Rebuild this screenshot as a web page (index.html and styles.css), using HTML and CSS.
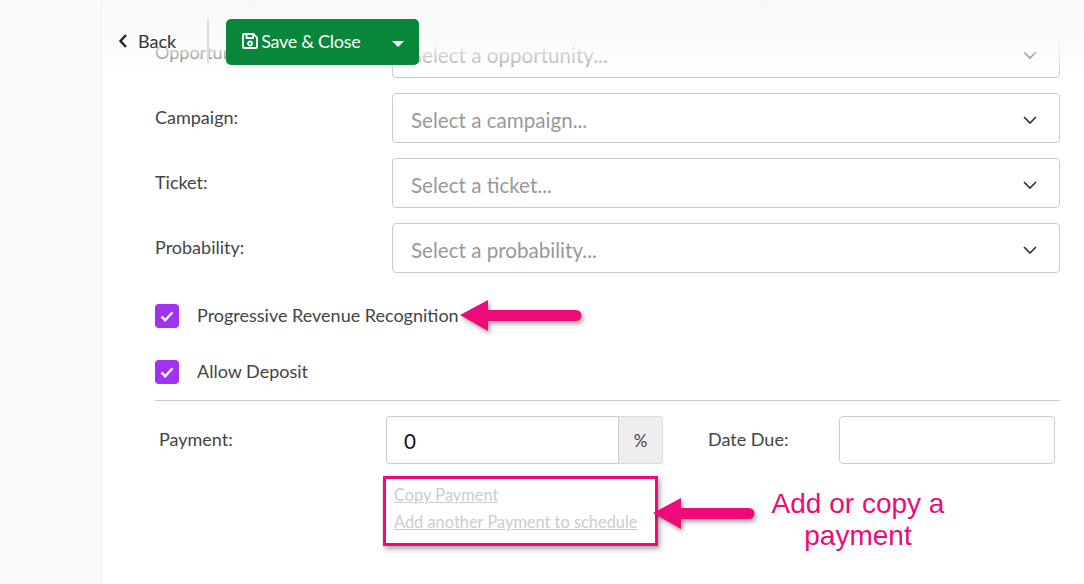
FILE: index.html
```html
<!DOCTYPE html>
<html lang="en">
<head>
<meta charset="utf-8">
<title>Payment form</title>
<link rel="stylesheet" href="styles.css">
</head>
<body>
<div class="page">
  <aside class="sidebar"></aside>
  <main class="main">
    <form class="form">
      <div class="row"><label class="label">Opportunity:</label><div class="select"><span>Select a opportunity...</span><svg class="chev" viewBox="0 0 14 8"><path d="M1 1l6 6 6-6"/></svg></div></div>
      <div class="row"><label class="label">Campaign:</label><div class="select"><span>Select a campaign...</span><svg class="chev" viewBox="0 0 14 8"><path d="M1 1l6 6 6-6"/></svg></div></div>
      <div class="row"><label class="label">Ticket:</label><div class="select"><span>Select a ticket...</span><svg class="chev" viewBox="0 0 14 8"><path d="M1 1l6 6 6-6"/></svg></div></div>
      <div class="row"><label class="label">Probability:</label><div class="select"><span>Select a probability...</span><svg class="chev" viewBox="0 0 14 8"><path d="M1 1l6 6 6-6"/></svg></div></div>
      <div class="check-row first"><span class="check"><svg viewBox="0 0 24 24"><path d="M6.500 12.500l3.700 3.700L17.500 8.300"/></svg></span><span class="check-text">Progressive Revenue Recognition</span></div>
      <div class="check-row"><span class="check"><svg viewBox="0 0 24 24"><path d="M6.500 12.500l3.700 3.700L17.500 8.300"/></svg></span><span class="check-text">Allow Deposit</span></div>
      <hr class="rule">
      <div class="pay-row">
        <label class="pay-label">Payment:</label>
        <div class="pay-col">
          <div class="pay-group"><div class="pay-input">0</div><div class="pay-addon">%</div></div>
          <div class="links"><a class="link">Copy Payment</a><a class="link">Add another Payment to schedule</a></div>
        </div>
        <label class="due-label">Date Due:</label>
        <div class="due-input"></div>
      </div>
    </form>
  </main>
</div>

<header class="toolbar">
  <button class="back" type="button"><svg viewBox="0 0 10 16"><path d="M8 2L2.500 8 8 14"/></svg>Back</button>
  <span class="divider"></span>
  <div class="save">
    <svg class="disk" viewBox="0 0 16 16"><path d="M2 1h9.500L15 4.500V14a1 1 0 0 1-1 1H2a1 1 0 0 1-1-1V2a1 1 0 0 1 1-1z"/><path d="M4.500 1v4h6.500V1"/><circle cx="8" cy="10.500" r="2"/></svg>
    <span class="save-text">Save &amp; Close</span>
    <span class="caret"></span>
  </div>
</header>

<div class="note-box"></div>
<svg class="arrow arrow-one" viewBox="0 0 130 40"><path d="M2 17L30 2v10h88a5.500 5.500 0 0 1 0 11H30v10z"/></svg>
<svg class="arrow arrow-two" viewBox="0 0 110 40"><path d="M2 17L30 2v10h68a5.500 5.500 0 0 1 0 11H30v10z"/></svg>
<div class="note-text">Add or copy a<br>payment</div>
</body>
</html>
```
FILE: styles.css
```css
* { box-sizing: border-box; }
html, body { margin: 0; height: 584px; overflow: hidden; background: #fff; }
body { font-family: Lato, sans-serif; color: #444; font-size: 18px; }
.page { display: flex; height: 584px; }
.sidebar { width: 102px; flex: none; background: #fafafa; border-right: 1px solid #f0f0f0; }
.main { flex: 1; padding: 28px 24px 0 53px; }
.form { display: flex; flex-direction: column; }
.row { display: flex; height: 50px; margin-bottom: 15px; }
.label { width: 237px; flex: none; padding-top: 13px; line-height: 22px; }
.select { flex: 1; border: 1px solid #ccc; border-radius: 4px; display: flex; align-items: center; justify-content: space-between; padding: 3px 22px 0 18px; font-size: 20.600px; color: #999; }
.chev { width: 14px; height: 8px; fill: none; stroke: #333; stroke-width: 1.700; }
.check-row { display: flex; align-items: center; height: 24px; gap: 18px; margin-bottom: 32px; }
.check-row.first { margin-top: 16px; }
.check-text { padding-bottom: 2px; }
.check { width: 24px; height: 24px; border-radius: 4px; background: #a033f0; display: block; }
.check svg { display: block; fill: none; stroke: #fff; stroke-width: 2.400; }
.rule { border: 0; border-top: 1px solid #ccc; margin: -16px 0 15px; height: 0; }
.pay-row { display: flex; align-items: flex-start; }
.pay-label { width: 231px; flex: none; padding: 12px 0 0 4px; line-height: 22px; }
.pay-col { width: 277px; flex: none; }
.pay-group { display: flex; height: 48px; }
.pay-input { flex: 1; border: 1px solid #ccc; border-radius: 4px 0 0 4px; border-right: 0; padding: 12px 0 0 17px; font-size: 20.600px; line-height: 24px; color: #111; }
.pay-addon { width: 45px; background: #eee; border: 1px solid #ddd; border-left: 1px solid #ccc; border-radius: 0 4px 4px 0; display: flex; align-items: center; justify-content: center; font-size: 17px; }
.links { display: flex; flex-direction: column; padding: 20px 0 0 8px; gap: 6px; }
.link { color: #ccc; text-decoration: underline; line-height: 21px; white-space: nowrap; font-size: 16.400px; }
.due-label { width: 176px; flex: none; padding: 12px 0 0 45px; line-height: 22px; white-space: nowrap; }
.due-input { width: 216px; height: 48px; border: 1px solid #ccc; border-radius: 4px; }
.toolbar { position: absolute; left: 103px; top: 0; right: 0; height: 72px; display: flex; align-items: flex-start; padding-top: 19px; background: linear-gradient(to bottom, #f7f7f8 0, #fafafa 8px, #fafafa 30px, rgba(250,250,250,.72) 50px, rgba(250,250,250,.4) 62px, rgba(255,255,255,0) 72px); }
.back { display: flex; align-items: center; gap: 10px; height: 44px; margin-left: 15px; padding: 0; background: none; border: 0; font: 18px Lato, sans-serif; color: #333; }
.back svg { width: 10px; height: 16px; fill: none; stroke: #222; stroke-width: 2.400; }
.divider { width: 2px; height: 44px; margin-left: 31px; background: #ddd; }
.save { display: flex; align-items: center; width: 193px; height: 46px; margin-left: 17px; padding: 0 15px 2px 16px; background: #08873a; border-radius: 5px; color: #fff; font-size: 18px; letter-spacing: -.3px; }
.disk { width: 16px; height: 16px; fill: none; stroke: #fff; stroke-width: 1.800; margin-right: 3px; }
.save-text { flex: 1; }
.caret { width: 0; height: 0; border-left: 6px solid transparent; border-right: 6px solid transparent; border-top: 6px solid #fff; margin-top: 5px; }
.note-box { position: absolute; left: 383px; top: 476px; width: 275px; height: 70px; border: 3px solid #ee0a78; box-shadow: 2px 3px 5px rgba(0,0,0,.35); }
.arrow { position: absolute; fill: #ee0a78; filter: drop-shadow(2px 3px 2px rgba(0,0,0,.35)); }
.arrow-one { left: 458px; top: 298px; width: 130px; height: 40px; }
.arrow-two { left: 651px; top: 496px; width: 110px; height: 40px; }
.note-text { position: absolute; left: 758px; top: 488px; width: 200px; text-align: center; font: 28px/32px "Liberation Sans", sans-serif; color: #ee0a78; }
```
